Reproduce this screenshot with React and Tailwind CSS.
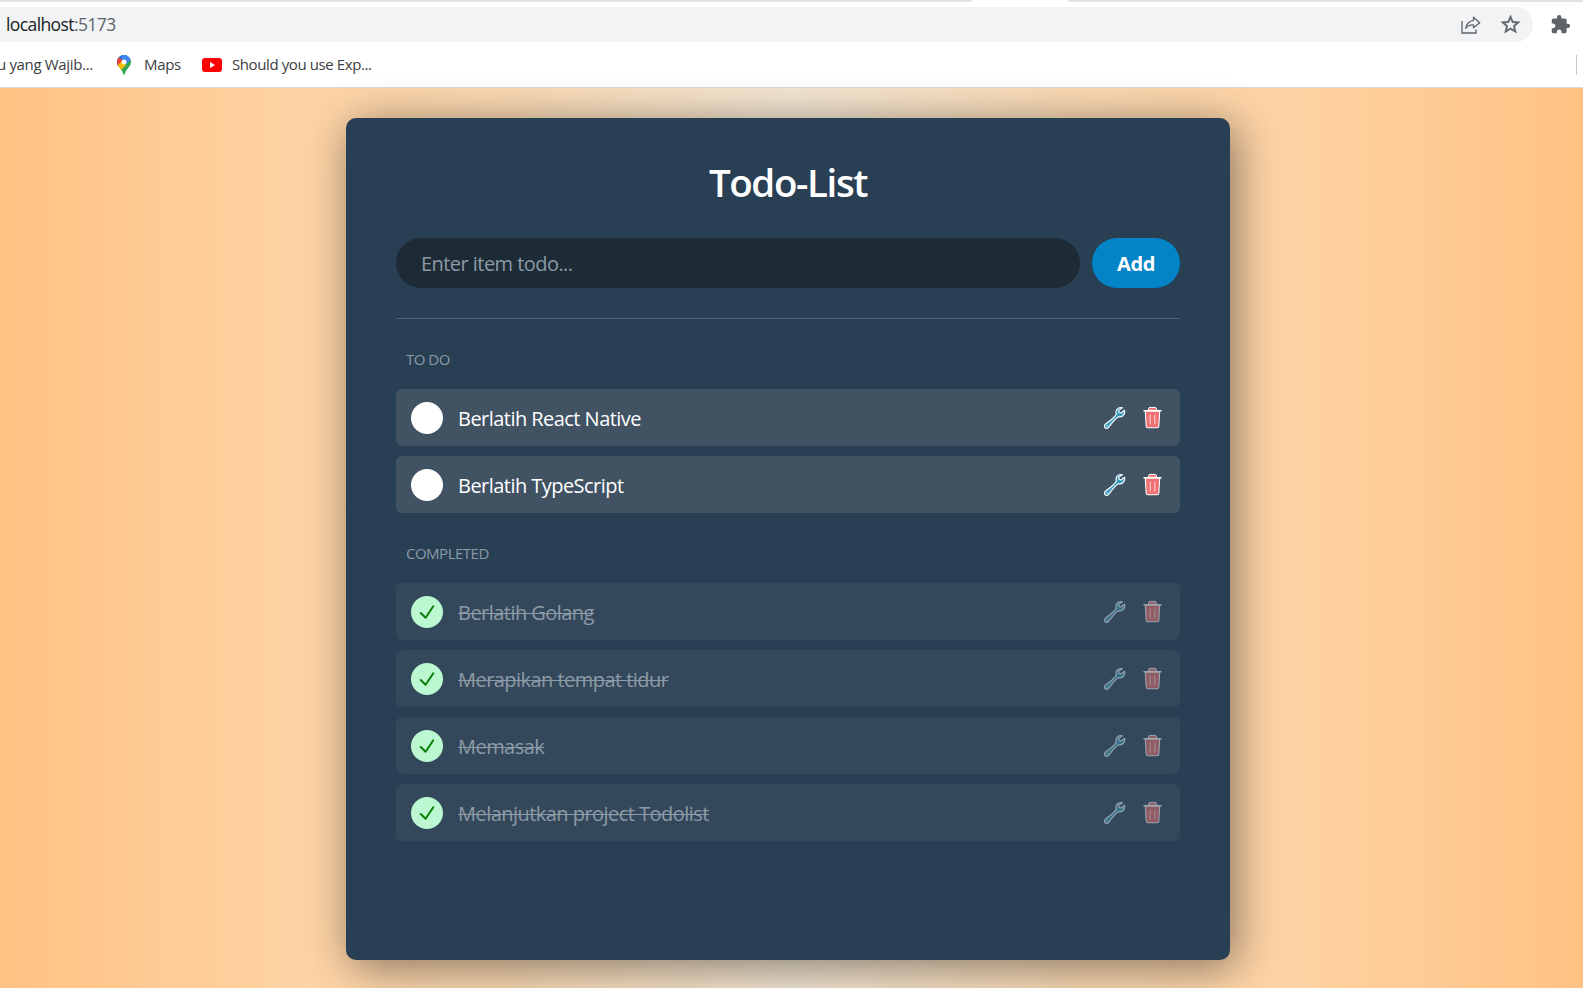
import React from "react";

const todos = ["Berlatih React Native", "Berlatih TypeScript"];
const completed = ["Berlatih Golang", "Merapikan tempat tidur", "Memasak", "Melanjutkan project Todolist"];

function MapsPin() {
  return (
    <svg viewBox="0 0 14 20" className="h-5 w-[14px]">
      <clipPath id="pin">
        <path d="M7 0a7 7 0 0 1 7 7c0 3-1.6 4.600-3.600 7.100C9 16 8.400 17 8 18.800c-.3 1.400-1.700 1.400-2 0C5.600 17 5 16 3.600 14.100 1.600 11.600 0 10 0 7a7 7 0 0 1 7-7z" />
      </clipPath>
      <g clipPath="url(#pin)">
        <rect width="14" height="20" fill="#34a853" />
        <path d="M0 11.500 12 -1-1-2z" fill="#1a73e8" />
        <path d="M4 0h10v5L9 9 4.500 4.500z" fill="#4285f4" />
        <path d="M-1 3 2 2l4 4-5 6h-2z" fill="#ea4335" />
        <path d="M0 11 5 6l4 4-6 6z" fill="#fbbc04" />
      </g>
      <circle cx="7" cy="7" r="2.500" fill="#fff" />
    </svg>
  );
}

function YouTube() {
  return (
    <svg viewBox="0 0 20 14" className="h-[14px] w-5">
      <rect width="20" height="14" rx="3" fill="#f00" />
      <path d="M8 4v6l5-3z" fill="#fff" />
    </svg>
  );
}

function Wrench() {
  return (
    <svg viewBox="0.500 0.500 24 24" className="h-6 w-6">
      <path
        d="M20 2.300C17 1.300 13.600 3.300 13.500 6.500c0 .8.100 1.400.3 2C12.500 11.300 9.500 14 3.300 18.300c-1.600 1.200-1.700 3-.7 4 1.100 1 2.700.8 3.800-.7C10.500 16 13 13 16 11.300c3.300.7 6.400-1.800 6.300-5.500l-.4-1-3.300 2.700-2.100-.7-.2-2z"
        fill="#3a9bb8"
        stroke="#f4fbff"
        strokeWidth="1.200"
        strokeLinejoin="round"
      />
      <circle cx="4.700" cy="20.200" r=".6" fill="#fff" />
    </svg>
  );
}

function Trash() {
  return (
    <svg viewBox="0.500 0.500 20 24" className="h-6 w-5">
      <path d="M2.800 5.500h14.400l-.9 15.300q-.2 1.500-1.500 1.500H5.200q-1.300 0-1.500-1.500z" fill="#ee7072" stroke="#fff" strokeWidth="1.100" />
      <path d="M6 4.800V3.200Q6.200 1.900 7.500 1.900h5q1.300 0 1.500 1.300V4.800z" fill="#ee7072" stroke="#fff" strokeWidth="1" />
      <path d="M1.500 5.300h17" stroke="#fff" strokeWidth="1.400" strokeLinecap="round" />
      <path d="M7.700 9.500v9M12.300 9.500v9" stroke="#ffc9c6" strokeWidth="1.200" strokeLinecap="round" />
    </svg>
  );
}

function Row({ text, done }) {
  return (
    <li className={done ? "flex h-[57px] items-center rounded-[6px] bg-[#34485b] pr-[17px] pl-[15px]" : "flex h-[57px] items-center rounded-[6px] bg-[#415263] pr-[17px] pl-[15px]"}>
      <span className={done ? "grid h-8 w-8 place-items-center rounded-full bg-[#bbf7d0]" : "h-8 w-8 rounded-full bg-white"}>
        {done && (
          <svg viewBox="0 0 32 32" className="h-8 w-8" fill="none" stroke="#087f08" strokeWidth="2" strokeLinecap="round" strokeLinejoin="round">
            <path d="m9.700 17 4.900 4.700 7.700-11.400" />
          </svg>
        )}
      </span>
      <span className={done ? "ml-[15px] flex-1 pt-[2px] text-[20px] leading-7 tracking-[-0.54px] text-[#8c9aa6] line-through decoration-1" : "ml-[15px] flex-1 pt-[2px] text-[20px] leading-7 tracking-[-0.54px] text-white"}>{text}</span>
      <span className={done ? "flex items-center gap-4 opacity-50" : "flex items-center gap-4"}>
        <Wrench />
        <Trash />
      </span>
    </li>
  );
}

export default function App() {
  return (
    <div className="flex h-[988px] w-[1583px] flex-col overflow-hidden bg-white font-['Open_Sans','Noto_Sans',sans-serif]">
      <header className="h-[88px] shrink-0 border-b border-[#d8dce1]">
        <div className="flex h-[7px] items-start">
          <div className="h-[2px] w-[972px] rounded-br-[4px] bg-[#dee1e6]" />
          <div className="w-[96px]" />
          <div className="h-[2px] flex-1 rounded-bl-[4px] bg-[#dee1e6]" />
        </div>
        <div className="flex h-[35px] items-center">
          <div className="flex h-full w-[1533px] items-center rounded-r-full bg-[#f1f3f4] pr-[12px] pl-[6px] text-[#5f6368]">
            <span className="flex-1 pb-px text-[17.500px] leading-[24px] tracking-[-0.6px]"><span className="text-[#202124]">localhost</span>:5173</span>
            <svg viewBox="0 0 20 18" className="mr-[19px] h-[18px] w-5" fill="none" stroke="currentColor" strokeWidth="1.300">
              <path d="M1 5v12h14v-3.500" />
              <path d="M12.500 1.200 18.700 6.700l-6.200 5V8.900C9 8.700 6.500 9.700 4.800 12.400 5.300 8 8 5 12.500 4.300z" strokeLinejoin="round" />
            </svg>
            <svg viewBox="1 1 22 22" className="h-[21px] w-[21px]" fill="currentColor" stroke="currentColor" strokeWidth=".4">
              <path d="M22 9.240l-7.190-.62L12 2 9.190 8.630 2 9.240l5.460 4.730L5.820 21 12 17.270 18.180 21l-1.630-7.030L22 9.240zM12 15.400l-3.760 2.270 1-4.280-3.320-2.880 4.380-.38L12 6.100l1.710 4.040 4.380.38-3.320 2.880 1 4.280L12 15.400z" />
            </svg>
          </div>
          <svg viewBox="0 0 24 24" className="ml-[17px] h-[21px] w-[21px]" fill="#5f6368">
            <path d="M20.500 11H19V7c0-1.100-.9-2-2-2h-4V3.500a2.500 2.500 0 0 0-5 0V5H4c-1.100 0-2 .9-2 2v3.800h1.500c1.500 0 2.700 1.200 2.700 2.700S5 16.200 3.500 16.200H2V20c0 1.100.9 2 2 2h3.800v-1.500c0-1.500 1.200-2.700 2.700-2.700s2.700 1.200 2.700 2.700V22H17c1.100 0 2-.9 2-2v-4h1.500a2.500 2.500 0 0 0 0-5z" />
          </svg>
        </div>
        <div className="flex h-[45px] items-center text-[15px] text-[#3c4043]">
          <span className="-ml-[3px] w-[96px] tracking-[-0.34px] whitespace-nowrap">u yang Wajib...</span>
          <span className="ml-6"><MapsPin /></span>
          <span className="ml-[13px] w-[38px] tracking-[-0.35px]">Maps</span>
          <span className="ml-5"><YouTube /></span>
          <span className="ml-[10px] flex-1 tracking-[-0.4px]">Should you use Exp...</span>
          <span className="mr-[6px] h-5 w-px bg-[#c4c7cb]" />
        </div>
      </header>
      <main className="flex flex-1 items-start bg-[linear-gradient(90deg,#ffc283_0%,#fed3a4_19%,#fad9b2_32%,#f3e6d3_50%,#fad9b2_68%,#fed3a4_81%,#ffc283_100%)] pt-[30px] pl-[346px]">
        <section className="h-[842px] w-[884px] rounded-[10px] bg-[#293f54] px-[50px] pt-[38px] shadow-[5px_7px_45px_rgba(0,0,0,0.48)]">
          <h1 className="h-[54px] text-center text-[38.500px] leading-[52px] font-semibold tracking-[-1.4px] text-white">Todo-List</h1>
          <form className="mt-7 flex h-[50px] gap-3">
            <div className="flex flex-1 items-center rounded-full bg-[#1d2b37] pt-[2px] pl-[25px] text-[20px] tracking-[-0.55px] text-[#8c9aa6]">Enter item todo...</div>
            <button type="button" className="w-[88px] rounded-full bg-[#0284c7] pt-[2px] text-[20px] font-bold tracking-[-0.4px] text-white">Add</button>
          </form>
          <hr className="mt-[30px] border-t border-[#4c6073]" />
          <h2 className="mt-[30px] pl-[10px] text-[15px] leading-[20px] tracking-[-0.5px] text-[#8c9aa6]">TO DO</h2>
          <ul className="mt-5 flex flex-col gap-[10px]">
            {todos.map((t) => <Row key={t} text={t} />)}
          </ul>
          <h2 className="mt-[30px] pl-[10px] text-[15px] leading-[20px] tracking-[-0.5px] text-[#8c9aa6]">COMPLETED</h2>
          <ul className="mt-5 flex flex-col gap-[10px]">
            {completed.map((t) => <Row key={t} text={t} done />)}
          </ul>
        </section>
      </main>
    </div>
  );
}
